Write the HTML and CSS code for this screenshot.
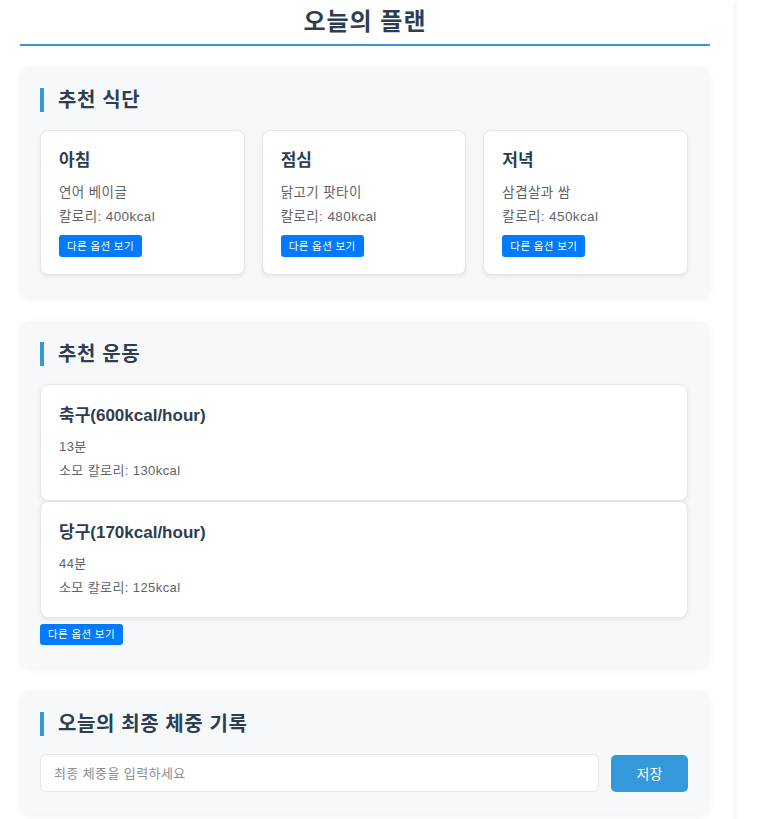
FILE: index.html
```html
<!DOCTYPE html>
<html lang="ko">
<head>
<meta charset="utf-8">
<title>오늘의 플랜</title>
<link rel="stylesheet" href="styles.css">
</head>
<body>
<div class="page">
  <h1 class="page-title">오늘의 플랜</h1>

  <section class="panel">
    <h2 class="panel-title">추천 식단</h2>
    <div class="meals">
      <div class="card meal">
        <h3 class="card-title">아침</h3>
        <p class="line">연어 베이글</p>
        <p class="line">칼로리: 400kcal</p>
        <button class="opt-btn">다른 옵션 보기</button>
      </div>
      <div class="card meal">
        <h3 class="card-title">점심</h3>
        <p class="line">닭고기 팟타이</p>
        <p class="line">칼로리: 480kcal</p>
        <button class="opt-btn">다른 옵션 보기</button>
      </div>
      <div class="card meal">
        <h3 class="card-title">저녁</h3>
        <p class="line">삼겹살과 쌈</p>
        <p class="line">칼로리: 450kcal</p>
        <button class="opt-btn">다른 옵션 보기</button>
      </div>
    </div>
  </section>

  <section class="panel">
    <h2 class="panel-title">추천 운동</h2>
    <div class="card exercise">
      <h3 class="card-title">축구(600kcal/hour)</h3>
      <p class="line small">13분</p>
      <p class="line small">소모 칼로리: 130kcal</p>
    </div>
    <div class="card exercise">
      <h3 class="card-title">당구(170kcal/hour)</h3>
      <p class="line small">44분</p>
      <p class="line small">소모 칼로리: 125kcal</p>
    </div>
    <button class="opt-btn ex-btn">다른 옵션 보기</button>
  </section>

  <section class="panel">
    <h2 class="panel-title">오늘의 최종 체중 기록</h2>
    <div class="weight-row">
      <input class="weight-input" type="text" placeholder="최종 체중을 입력하세요">
      <button class="save-btn">저장</button>
    </div>
  </section>
</div>
</body>
</html>
```

FILE: styles.css
```css
html, body {
  margin: 0;
  padding: 0;
  background: #ffffff;
}

body {
  font-family: "Liberation Sans", "Noto Sans CJK KR", sans-serif;
  color: #2c3e50;
  overflow: hidden;
}

.page {
  width: 734px;
  padding: 0 24px 20px 20px;
  min-height: 100vh;
  box-sizing: border-box;
  box-shadow: 3px 0 4px -2px rgba(0, 0, 0, 0.07);
}

.page-title {
  margin: 0 0 21px;
  padding: 6px 0 6px;
  font-size: 24px;
  line-height: 32px;
  font-weight: 700;
  letter-spacing: 1px;
  text-align: center;
  color: #2c3e50;
  border-bottom: 2px solid #3498db;
}

.panel {
  background: #f6f8fa;
  border-radius: 10px;
  padding: 21px 22px 22px 20px;
  margin-bottom: 24px;
  box-shadow: 0 2px 6px rgba(0, 0, 0, 0.06);
}

.panel-title {
  margin: 0 0 18px;
  padding-left: 14px;
  border-left: 4px solid #3498db;
  font-size: 20px;
  line-height: 24px;
  font-weight: 700;
  letter-spacing: 0.6px;
  color: #2c3e50;
}

.meals {
  display: grid;
  grid-template-columns: repeat(3, 1fr);
  gap: 17px;
}

.card {
  background: #ffffff;
  border: 1px solid #e3e7eb;
  border-radius: 8px;
  box-shadow: 0 2px 5px rgba(0, 0, 0, 0.07);
}

.meal {
  padding: 18px 18px 17px;
}

.card-title {
  margin: 0 0 8px;
  font-size: 17px;
  line-height: 24px;
  font-weight: 700;
  color: #2c3e50;
}

.line {
  margin: 0;
  font-size: 13.5px;
  line-height: 24px;
  letter-spacing: 0.4px;
  color: #5f6368;
}

.line.small {
  font-size: 13px;
}

.opt-btn {
  display: inline-block;
  margin-top: 6px;
  padding: 0 8px;
  height: 22px;
  border: none;
  border-radius: 3px;
  background: #007bff;
  color: #ffffff;
  font-family: inherit;
  font-size: 10.5px;
  line-height: 22px;
  letter-spacing: 0.4px;
  cursor: pointer;
}

.exercise {
  padding: 20px 18px 17px;
}

.exercise .card-title {
  line-height: 22px;
  margin-bottom: 8px;
}

.ex-btn {
  display: block;
  margin-top: 6px;
  height: 21px;
  line-height: 21px;
}

.weight-row {
  display: flex;
  gap: 12px;
  align-items: center;
}

.weight-input {
  flex: 1;
  height: 38px;
  box-sizing: border-box;
  border: 1px solid #e2e8ec;
  border-radius: 6px;
  padding: 0 13px;
  font-family: inherit;
  font-size: 13px;
  letter-spacing: 0.4px;
  background: #ffffff;
  color: #333;
}

.weight-input::placeholder {
  color: #8a8f94;
}

.save-btn {
  width: 77px;
  height: 37px;
  border: none;
  border-radius: 5px;
  background: #3498db;
  color: #ffffff;
  font-family: inherit;
  font-size: 14px;
  cursor: pointer;
}
```
